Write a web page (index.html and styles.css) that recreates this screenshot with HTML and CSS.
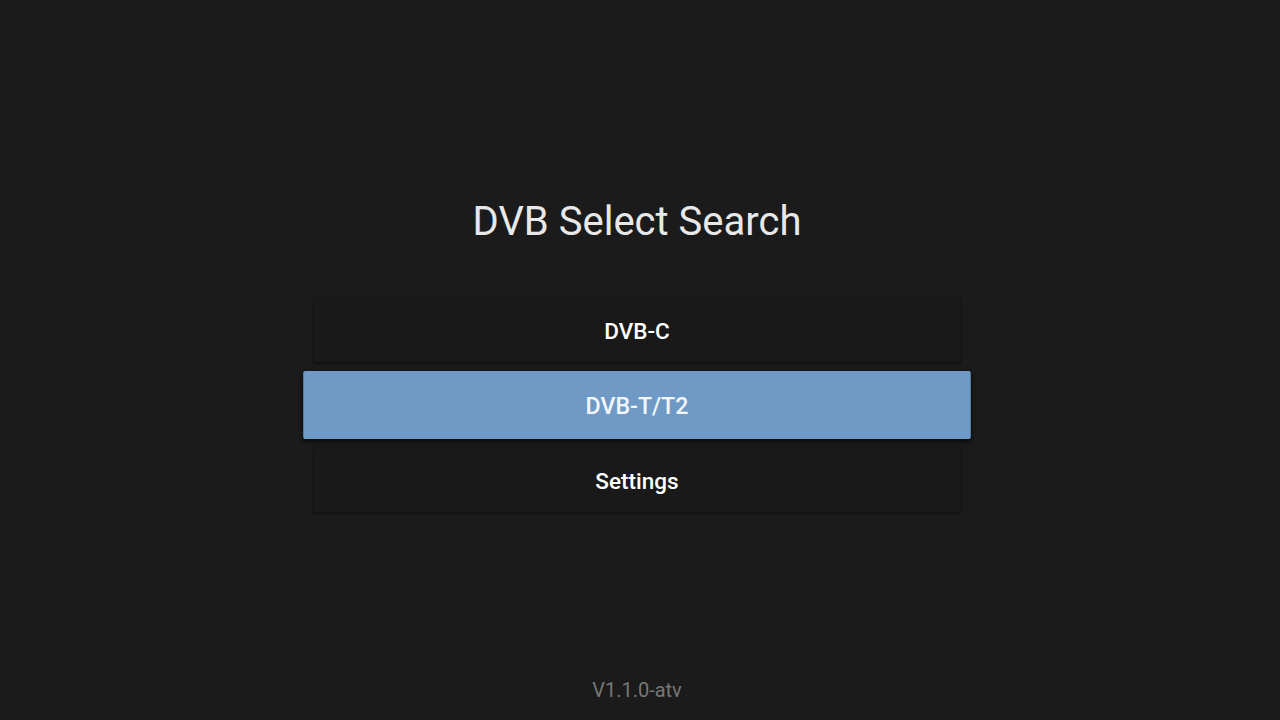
FILE: index.html
```html
<!DOCTYPE html>
<html>
<head>
<meta charset="utf-8">
<link rel="stylesheet" href="styles.css">
</head>
<body>
<div class="screen">
  <h1 class="title">DVB Select Search</h1>
  <div class="menu">
    <div class="item">DVB-C</div>
    <div class="item focused">DVB-T/T2</div>
    <div class="item">Settings</div>
  </div>
  <div class="version">V1.1.0-atv</div>
</div>
</body>
</html>
```
FILE: styles.css
```css
html, body {
  margin: 0;
  padding: 0;
  background: #1b1b1b;
}
.screen {
  width: 1274px;
  height: 720px;
  display: flex;
  flex-direction: column;
  align-items: center;
  font-family: Roboto, "Noto Sans", sans-serif;
}
.title {
  margin: 196px 0 0 0;
  font-size: 40px;
  font-weight: 400;
  line-height: 52px;
  color: #e8e8e8;
}
.menu {
  margin-top: 49px;
  display: flex;
  flex-direction: column;
  gap: 9px;
}
.item {
  width: 646px;
  height: 63px;
  padding-top: 1px;
  border: 1px solid #151515;
  background: #191919;
  box-shadow: 0 1px 2px rgba(0,0,0,0.5);
  border-radius: 2px;
  display: flex;
  align-items: center;
  justify-content: center;
  color: #ffffff;
  font-size: 22.5px;
  font-weight: 500;
  box-sizing: content-box;
}
.item.focused {
  background: #6f9ac6;
  border-color: #6f9ac6;
  transform: scale(1.03);
  box-shadow: 0 2px 4px rgba(0,0,0,0.6);
  color: #f4f6f9;
}
.version {
  margin-top: auto;
  margin-bottom: 18px;
  font-size: 20px;
  color: #777777;
}
```
